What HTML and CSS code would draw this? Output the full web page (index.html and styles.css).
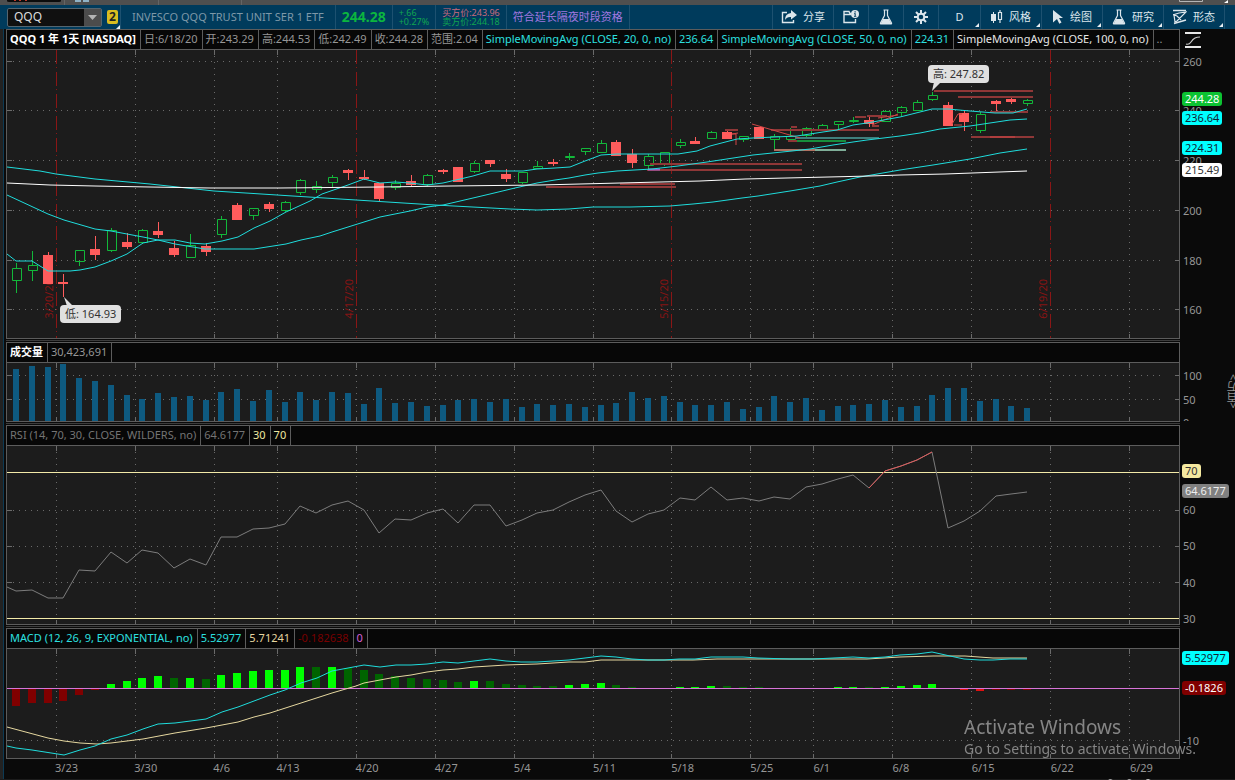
FILE: index.html
```html
<!DOCTYPE html>
<html lang="zh-CN">
<head>
  <meta charset="UTF-8">
  <title>QQQ</title>
  <link rel="stylesheet" href="styles.css">
</head>
<body>

  <div class="tabstrip">
    <svg class="tabs-left" width="250" height="5" viewBox="0 0 250 5">
      <path d="M7 0h54v1q0 1-2 1H9q-2 0-2-1z" fill="#0c0c0c"/>
      <path d="M14 0h2v1h-2zM19 0h2v1h-2zM25 0h2v1h-2z" fill="#c03a2b"/>
      <path d="M75 0h6v2h-6zM83 0h6v2h-6z" fill="#8fb2c6"/>
      <path d="M64 0h1v5h-1zM158 0h1v5h-1zM241 0h1v5h-1z" fill="#656565"/>
    </svg>
    <svg class="tabs-right" width="60" height="5" viewBox="0 0 60 5">
      <path d="M4.500 0v1.500h23V0" fill="none" stroke="#b5b5b5"/>
      <path d="M53 0v3h-4z" fill="#fff"/>
    </svg>
  </div>

  <header class="toolbar">
    <div class="symbol">
      <input type="text" id="symbol" aria-label="代码" value="QQQ">
      <button class="drop" aria-label="选择代码"><svg width="9" height="5" viewBox="0 0 9 5"><path d="M0 0h9L4.500 5z" fill="#b4b4b4"/></svg></button>
    </div>
    <button class="link corner">2</button>
    <div class="cell company">INVESCO QQQ TRUST UNIT SER 1 ETF</div>
    <div class="cell last">244.28</div>
    <div class="cell stack green"><span>+.66</span><span>+0.27%</span></div>
    <div class="cell stack"><span class="red">买方价:243.96</span><span class="green">卖方价:244.18</span></div>
    <div class="cell session">符合延长隔夜时段资格</div>

    <nav class="actions">
      <button class="share">
        <svg width="16" height="14" viewBox="0 0 16 14"><path d="M6 2.500H1.500v10h11V10" fill="none" stroke="#dce6ec" stroke-width="1.400"/><path d="M10 0l6 5-6 4.500V7Q6 6.500 4 10 4 3.500 10 3z" fill="#dce6ec"/></svg>
        分享</button>
      <button class="small" aria-label="日历">
        <svg width="16" height="14" viewBox="0 0 16 14"><path d="M8 3.500H7l-1-2H1v11h11.500V9M1 4.500h7" fill="none" stroke="#dce6ec" stroke-width="1.400"/><circle cx="12" cy="4" r="4" fill="#dce6ec"/><path d="M11.500 1.200h1.200v1.200h-1.200zM11 3.300h1.700v2.600h.6v.8h-2.300v-.8h.6V4.100H11z" fill="#003b5c"/></svg>
      </button>
      <button class="small" aria-label="扫描">
        <svg width="14" height="16" viewBox="0 0 14 16"><path d="M4.500 1h5M5.500 1v5.500L1.500 14q-.4 1 .7 1h9.600q1.100 0 .7-1L8.500 6.500V1" fill="none" stroke="#dce6ec" stroke-width="1.200"/><path d="M4 10h6l2.500 5h-11z" fill="#dce6ec"/></svg>
      </button>
      <button class="small" aria-label="设置">
        <svg width="14" height="14" viewBox="-7 -7 14 14"><path d="M0-7V7M-7 0H7M-5-5L5 5M-5 5L5-5" stroke="#dce6ec" stroke-width="2"/><circle r="3.300" fill="#003b5c" stroke="#dce6ec" stroke-width="2"/></svg>
      </button>
      <button class="period corner">D</button>
      <button class="tool corner">
        <svg width="12" height="14" viewBox="0 0 12 14"><path d="M0 4h5v7H0zM2 2h1v11H2z" fill="#dce6ec"/><path d="M7.500 2.500h3v7h-3zM9 0v2.500M9 9.500V13" fill="none" stroke="#dce6ec" stroke-width="1.200"/></svg>
        风格</button>
      <button class="tool corner">
        <svg width="12" height="14" viewBox="0 0 12 14"><path d="M1 0l10 8H7l2.500 4.500-2.200 1.200L5 9l-4 3.500z" fill="#dce6ec"/></svg>
        绘图</button>
      <button class="tool corner">
        <svg width="14" height="16" viewBox="0 0 14 16"><path d="M4.500 1h5M5.500 1v5.500L1.500 14q-.4 1 .7 1h9.600q1.100 0 .7-1L8.500 6.500V1" fill="none" stroke="#dce6ec" stroke-width="1.200"/><path d="M4 10h6l2.500 5h-11z" fill="#dce6ec"/></svg>
        研究</button>
      <button class="tool corner">
        <svg width="14" height="16" viewBox="0 0 14 16"><path d="M0 1.500h13M1 14.500l12-3.500" stroke="#dce6ec" stroke-width="1.400"/><path d="M0 6l6-2 7-1-9 9-2 1-1-7 3 1 4 4" fill="none" stroke="#dce6ec" stroke-width="1.200"/></svg>
        形态</button>
      <span class="end"></span>
    </nav>
  </header>

  <main>
    <section class="panel">
      <div class="plot">
        <div class="legend">
          <b>QQQ 1 年 1天 [NASDAQ]</b>
          <span>日:6/18/20</span><span>开:243.29</span><span>高:244.53</span><span>低:242.49</span><span>收:244.28</span><span>范围:2.04</span>
          <span class="cyan">SimpleMovingAvg (CLOSE, 20, 0, no)</span><span class="cyan">236.64</span>
          <span class="cyan">SimpleMovingAvg (CLOSE, 50, 0, no)</span><span class="cyan">224.31</span>
          <span class="white">SimpleMovingAvg (CLOSE, 100, 0, no)</span><span class="more">..</span>
        </div>
        <div class="chart" id="price"></div>
      </div>
      <div class="axis">
        <button class="scale" aria-label="坐标"><svg width="16" height="16" viewBox="0 0 16 16"><path d="M0 1h16M0 15h16" stroke="#e8e8e8" stroke-width="2"/><path d="M1 12q3 1 5-2t4-4 5-1" fill="none" stroke="#c8c8c8" stroke-width="1.200"/></svg></button>
        <div class="ticks" id="price-axis"></div>
      </div>
    </section>

    <section class="panel">
      <div class="plot">
        <div class="legend"><b>成交量</b><span>30,423,691</span></div>
        <div class="chart" id="volume"></div>
      </div>
      <div class="axis"><div class="ticks" id="volume-axis"><span class="unit">&lt;百万&gt;</span></div></div>
    </section>

    <section class="panel">
      <div class="plot">
        <div class="legend"><span class="dim">RSI (14, 70, 30, CLOSE, WILDERS, no)</span><span class="dim">64.6177</span><span class="cream">30</span><span class="cream">70</span></div>
        <div class="chart" id="rsi"></div>
      </div>
      <div class="axis"><div class="ticks" id="rsi-axis"></div></div>
    </section>

    <section class="panel">
      <div class="plot">
        <div class="legend"><span class="cyan">MACD (12, 26, 9, EXPONENTIAL, no)</span><span class="cyan">5.52977</span><span class="sand">5.71241</span><span class="maroon">-0.182638</span><span class="pink">0</span></div>
        <div class="chart" id="macd"></div>
      </div>
      <div class="axis"><div class="ticks" id="macd-axis"></div></div>
    </section>

    <div class="dates" id="dates"></div>
  </main>

  <footer class="bottom">
    <svg width="60" height="2" viewBox="0 0 60 2"><path d="M3 2q3-3 7 0M22 2q3-3 7 0M43 0l5 2h-5z" fill="none" stroke="#ccc"/></svg>
  </footer>

  <aside class="watermark">
    <p class="big">Activate Windows</p>
    <p>Go to Settings to activate Windows.</p>
  </aside>

  <script src="chart.js"></script>
</body>
</html>
```

FILE: styles.css
```css
* {
  box-sizing: border-box;
}
body {
  margin: 0;
  min-height: 100vh;
  display: flex;
  flex-direction: column;
  overflow: hidden;
  background: #0a0a0a;
  color: #969696;
  font-family: "Noto Sans", "Noto Sans CJK SC", sans-serif;
  font-size: 11px;
  line-height: 18px;
}
button, input {
  font: inherit;
  color: inherit;
  background: none;
  border: none;
  padding: 0;
}
svg {
  display: block;
  flex: none;
}

/* top strip and toolbar */
.tabstrip {
  display: flex;
  justify-content: space-between;
  height: 5px;
  background: #4f4f4f;
}
.toolbar {
  display: flex;
  height: 24px;
  background: #003b5c;
  padding: 0 10px 0 7px;
  white-space: nowrap;
}
.symbol {
  display: flex;
  align-self: center;
  width: 95px;
  height: 19px;
  background: #101010;
  border: 1px solid #55656f;
  border-radius: 2px;
}
.symbol input {
  flex: 1;
  min-width: 0;
  padding-left: 6px;
  color: #ddd;
  font-size: 12px;
}
.drop {
  display: flex;
  align-items: center;
  justify-content: center;
  width: 17px;
  background: #4c4c4c;
}
.link {
  align-self: center;
  width: 11px;
  height: 14px;
  margin: 0 2px 0 5px;
  background: #d9bd20;
  border-radius: 2px;
  color: #222;
  font-size: 12px;
  font-weight: bold;
  line-height: 14px;
}
.corner {
  position: relative;
}
.corner::after {
  content: "";
  position: absolute;
  right: 1px;
  bottom: 2px;
  border: 2px solid #e8eef2;
  border-top-color: transparent;
  border-left-color: transparent;
}
.link::after {
  right: -2px;
  bottom: -5px;
}
.cell {
  display: flex;
  align-items: center;
  padding: 0 6px;
  border-left: 1px solid #1d5170;
}
.company {
  padding: 0 11px;
  color: #7d98a8;
}
.last {
  color: #0cb53f;
  font-size: 14px;
  font-weight: bold;
}
.stack {
  flex-direction: column;
  align-items: flex-start;
  justify-content: center;
  font-size: 9px;
  line-height: 9px;
}
.green { color: #10a550; }
.red { color: #c96a7c; }
.session {
  color: #a078e0;
  border-right: 1px solid #1d5170;
}
.actions {
  display: flex;
  margin-left: auto;
  color: #dce6ec;
}
.actions button {
  display: flex;
  align-items: center;
  justify-content: center;
  gap: 6px;
  border-left: 1px solid #1d5170;
}
.actions .share { width: 61px; }
.actions .small { width: 35px; }
.actions .period { width: 42px; }
.actions .tool { width: 61px; }
.end { border-left: 1px solid #1d5170; }

/* panels */
main {
  display: flex;
  flex-direction: column;
  gap: 3px;
  padding-left: 6px;
  background: linear-gradient(90deg, #222 3px, #0c3a54 3px 4px, #0a0a0a 4px);
}
.panel {
  display: flex;
  position: relative;
}
.panel + .panel::before {
  content: "";
  position: absolute;
  top: -2px;
  left: 0;
  right: 55px;
  height: 1px;
  background: #3c3c3c;
}
.plot {
  flex: 1;
  min-width: 0;
  border: 1px solid #5c5c5c;
}
.legend {
  display: flex;
  height: 20px;
  border-bottom: 1px solid #5c5c5c;
  background: #070707;
  white-space: nowrap;
  overflow: hidden;
}
.legend > * {
  flex: none;
  padding: 0 4px 0 3px;
  border-right: 1px solid #5c5c5c;
}
.legend b { color: #fff; }
.legend .more {
  border-right: none;
}
.cyan { color: #2ce0e0; }
.white { color: #e8e8e8; }
.dim { color: #747474; }
.cream { color: #eee8a0; }
.sand { color: #e6d6a0; }
.maroon { color: #780000; }
.pink { color: #d35fd3; }

.chart {
  position: relative;
  background: #1c1c1c;
}
.chart svg {
  position: relative;
  width: 100%;
  height: 100%;
}
#price, #price-axis { height: 288px; }
#volume, #volume-axis { height: 58px; }
#rsi, #rsi-axis { height: 178px; }
#macd, #macd-axis { height: 109px; }
.chart path, .chart line, .chart polyline {
  vector-effect: non-scaling-stroke;
}
.grid { stroke: #6a6a6a; stroke-dasharray: 1 5; }
.mark { stroke: #6a6a6a; }
.expiry { stroke: #8a1616; stroke-dasharray: 14 3 1 4; }
.ma { fill: none; stroke: #1fdcdc; }
.ma.long { stroke: #fff; }
.up { fill: none; stroke: #12b83a; }
.down { fill: #ff5c5c; stroke: none; }
.level { stroke: #8f3737; stroke-width: 2; fill: none; }
.trend { stroke: #d04646; fill: none; }
.bar { fill: #0e5a80; }
.rsi-line { fill: none; stroke: #7c7c7c; }
.rsi-high { fill: none; stroke: #e05a5a; }
.band { stroke: #f3eaa8; }
.zero { stroke: #d873d8; }
.signal { fill: none; stroke: #e6d8a0; }
.macd-line { fill: none; stroke: #1fdcdc; }

.expiry-label {
  position: absolute;
  bottom: 19px;
  width: 14px;
  line-height: 14px;
  margin-left: -14px;
  writing-mode: vertical-rl;
  transform: rotate(180deg);
  color: #841414;
}
.callout {
  position: absolute;
  height: 18px;
  padding: 0 5px;
  border-radius: 4px;
  background: #e0e0e0;
  color: #333;
}

.axis {
  width: 55px;
  flex: none;
}
.scale {
  display: flex;
  align-items: center;
  height: 21px;
  padding-left: 5px;
}
.ticks {
  position: relative;
  overflow: hidden;
}
.ticks:only-child {
  margin-top: 21px;
}
.tick {
  position: absolute;
  left: 3px;
  line-height: 14px;
  margin-top: -7px;
}
.tag {
  left: 2px;
  padding: 0 3px;
  border-radius: 3px;
  z-index: 1;
}
.tag.lime { background: #0cc232; color: #fff; }
.tag.aqua { background: #00ffff; color: #123; }
.tag.snow { background: #fff; color: #333; }
.tag.butter { background: #f5e9a0; color: #333; }
.tag.gray { background: #808080; color: #eee; }
.tag.wine { background: #800000; color: #fff; }
.unit {
  position: absolute;
  right: -6px;
  top: 11px;
  width: 16px;
  line-height: 16px;
  writing-mode: vertical-rl;
  transform: rotate(180deg);
}

.dates {
  position: relative;
  height: 20px;
  margin-top: -3px;
  margin-right: 55px;
}
.dates span {
  position: absolute;
}
.bottom {
  display: flex;
  justify-content: flex-end;
  padding-right: 71px;
  height: 2px;
  background: #1c1c1c;
}

.watermark {
  position: fixed;
  right: 39px;
  bottom: 20px;
  color: #858585;
  font-size: 14px;
  z-index: 2;
  pointer-events: none;
}
.watermark p {
  margin: 0;
  line-height: 22px;
}
.watermark .big {
  font-size: 19px;
}
```

FILE: chart.js
```js
// drawing space: x runs from LEFT to LEFT + WIDTH, stretched to the panel
const LEFT = 7, WIDTH = 1172;
const weeks = [[56, '3/23'], [135, '3/30'], [214, '4/6'], [277, '4/13'], [356, '4/20'], [435, '4/27'],
  [514, '5/4'], [593, '5/11'], [671, '5/18'], [750, '5/25'], [813, '6/1'], [892, '6/8'],
  [971, '6/15'], [1050, '6/22'], [1129, '6/29']];
const expiries = { 56: '3/20/20', 356: '4/17/20', 671: '5/15/20', 1050: '6/19/20' };
const barX = i => Math.round(16 + i * 15.8);
const pct = x => (x - LEFT) / WIDTH * 100 + '%';

// u/d, high, body top, body bottom, low
const candles = [
  ['u',263,268,280,292], ['u',251,265,270,280], ['d',252,255,284,284], ['d',274,282,284,297], ['u',250,250,261,265],
  ['d',236,249,255,260], ['u',228,230,250,251], ['d',233,242,247,249], ['u',229,230,242,243], ['d',222,231,235,238],
  ['d',241,248,255,257], ['u',234,245,257,257], ['d',243,246,252,256], ['u',216,219,234,237], ['d',203,205,220,220],
  ['u',208,208,215,219], ['d',202,204,209,212], ['u',201,202,210,211], ['u',179,180,192,194], ['u',181,186,189,192],
  ['u',175,177,182,186], ['d',169,170,173,180], ['d',170,177,179,180], ['d',183,183,199,201], ['u',180,183,187,189],
  ['d',175,181,185,186], ['u',174,175,184,185], ['d',169,170,172,174], ['d',167,167,182,182], ['u',161,163,171,172],
  ['d',160,160,164,167], ['d',169,174,179,182], ['u',172,172,182,183], ['u',161,166,168,168], ['d',159,162,164,166],
  ['u',153,156,157,159], ['u',148,148,151,154], ['u',140,143,152,152], ['d',140,142,156,156], ['d',149,154,163,168],
  ['u',154,156,165,170], ['u',152,152,164,165], ['u',139,142,145,147], ['d',137,141,144,144], ['u',131,132,138,138],
  ['d',130,132,139,139], ['u',136,136,139,141], ['d',127,127,139,139], ['u',134,136,139,150], ['u',128,136,139,139],
  ['u',127,128,135,138], ['u',124,125,129,129], ['u',121,121,124,129], ['u',117,120,121,122], ['d',116,120,124,127],
  ['u',110,111,121,121], ['u',106,107,112,115], ['u',100,102,110,110], ['u',92,95,99,100], ['d',102,105,126,126],
  ['d',110,113,122,131], ['u',112,114,130,132], ['d',100,101,104,112], ['d',97,99,102,104], ['u',99,100,103,105]
];
const volumes = [369,366,367,364,378,381,385,395,399,393,397,396,400,392,389,401,390,402,392,400,392,393,404,388,403,
  402,406,405,400,399,402,399,407,404,405,404,407,405,403,392,398,396,402,405,405,402,409,407,396,402,398,410,406,
  405,404,400,407,406,395,388,388,401,399,406,408];
const rsi = [591,590,598,598,570,571,552,563,550,553,568,559,565,537,537,529,528,524,506,513,505,501,510,533,519,520,
  513,509,523,505,505,526,520,513,510,502,495,490,511,522,514,510,498,500,487,500,498,501,497,499,487,484,479,475,
  488,471,466,460,452,528,521,511,496,494,492];
// histogram edge opposite the zero line; G/g rising and falling above, R/r below
const hist = 'r706 r703 r703 r701 r695 r690 G684 G681 G678 G676 g678 G678 g679 G675 G673 G671 G670 G670 G667 g667 G667 g668 g670 g674 g676 g678 g679 g680 g682 G681 g681 g684 g685 g686 g686 G685 G684 G683 g685 g687 - - G687 G687 G686 g686 g687 g687 - - - - G687 G687 g687 G687 G686 G685 G684 - R690 R691 r690 r690 r690'.split(' ');
const histColor = { G: '#00ff00', g: '#006400', R: '#e01010', r: '#800000' };

const fast = '7,254 16,261 32,261 48,271 70,271 80,270 95,267 111,261 127,254 143,243 158,240 175,240 190,243 205,244 222,241 238,237 254,228 270,221 286,212 310,201 322,194 348,185 364,179 380,183 395,182 410,183 427,185 443,183 473,176 490,171 523,171 537,169 555,168 570,167 585,161 601,155 617,154 678,154 697,151 710,146 737,139 753,138 797,136 823,132 837,130 853,125 867,123 900,117 932,109 948,109 970,111 995,113 1013,113 1027,109';
const sma20 = '7,195 48,214 64,220 95,229 111,231 143,237 158,240 175,244 205,249 254,249 286,244 301,240 320,236 332,232 348,227 364,222 380,217 395,214 410,211 427,207 443,205 473,198 490,194 515,188 537,183 555,180 569,178 585,175 598,173 617,171 652,169 678,166 707,162 753,155 792,151 810,149 833,145 853,142 867,140 900,136 920,133 940,129 970,126 1010,120 1027,119';
const sma50 = '7,167 40,171 56,174 95,179 150,184 214,191 277,195 356,200 435,205 510,209 537,210 569,209 593,207 630,207 670,206 693,204 713,202 742,198 758,196 790,191 820,186 837,182 860,177 900,170 933,165 970,159 1000,153 1027,149';
const sma100 = '7,183 50,185 95,186 150,187 210,188 280,188 380,187 450,186 540,185 620,183 700,181 745,179 870,176 900,175 945,174 1027,171';
const macd = '7,746 16,748 32,750 64,755 80,750 95,746 111,739 127,735 143,729 158,724 175,723 206,719 222,712 238,707 254,701 270,695 285,690 301,683 317,678 332,671 348,668 364,665 380,667 396,665 411,665 427,664 443,662 458,663 474,661 490,659 506,661 521,662 537,662 569,660 585,658 601,656 616,657 632,659 648,660 664,660 679,659 695,659 711,657 743,657 758,658 790,659 813,659 853,657 869,658 885,657 900,655 917,654 932,652 950,656 964,659 980,660 993,660 1010,659 1027,659';
const signal = '7,727 48,738 64,741 80,743 97,744 111,743 143,739 175,733 206,728 238,722 254,717 270,713 301,703 332,693 356,686 364,683 396,677 411,675 427,672 443,670 458,669 474,667 506,665 537,664 569,662 585,662 601,660 693,660 717,659 753,659 790,659 867,659 900,657 933,656 965,656 993,658 1027,658';

const line = (x1, y1, x2, y2, cls) => `<line x1="${x1}" y1="${y1}" x2="${x2}" y2="${y2}" class="${cls}"/>`;
const poly = (points, cls) => `<polyline points="${points}" class="${cls}"/>`;
const rect = (x, y, w, h, extra) => `<rect x="${x}" y="${y}" width="${w}" height="${h}" ${extra}/>`;

function grid(top, height, rows, withExpiry) {
  const bottom = top + height, right = LEFT + WIDTH;
  let s = '';
  weeks.forEach(([x]) => {
    const gx = x + .5;
    if (withExpiry && expiries[x]) {
      s += line(gx, top, gx, bottom, 'expiry');
    } else {
      s += line(gx, top, gx, bottom, 'grid') + line(gx, top, gx, top + 5, 'mark') + line(gx, bottom - 4, gx, bottom, 'mark');
    }
  });
  rows.forEach(y => {
    s += line(LEFT, y + .5, right - 14, y + .5, 'grid') + line(LEFT, y + .5, LEFT + 5, y + .5, 'mark') + line(right - 4, y + .5, right, y + .5, 'mark');
  });
  return s;
}

function draw(id, top, height, content) {
  document.getElementById(id).insertAdjacentHTML('beforeend',
    `<svg viewBox="${LEFT} ${top} ${WIDTH} ${height}" preserveAspectRatio="none">${content}</svg>`);
}

function axis(id, top, ticks) {
  document.getElementById(id).insertAdjacentHTML('beforeend', ticks.map(([y, text, tag]) =>
    `<span class="tick ${tag ? 'tag ' + tag : ''}" style="top:${y - top}px">${text}</span>`).join(''));
}

// price
const price = document.getElementById('price');
for (const x in expiries) {
  price.insertAdjacentHTML('beforeend', `<span class="expiry-label" style="left:${pct(+x)}">${expiries[x]}</span>`);
}
let s = grid(50, 288, [61, 110, 160, 210, 260, 309], true);
candles.forEach(([dir, high, top, bottom, low], i) => {
  const x = barX(i);
  if (dir === 'u') {
    s += `<path class="up" d="M${x - 3.5} ${top + .5}h9v${Math.max(bottom - top, 1)}h-9zM${x + .5} ${high}V${top}M${x + .5} ${bottom + 1}V${low + 1}"/>`;
  } else {
    s += rect(x - 5, top, 10, bottom - top, 'class="down"') + rect(x, high, 1, low - high, 'class="down"');
  }
});
[[546, 676, 187], [620, 675, 184], [650, 802, 164], [647, 802, 170], [725, 738, 130], [771, 879, 130], [791, 797, 127],
 [855, 866, 117], [867, 887, 116], [872, 879, 126], [788, 797, 141], [934, 1033, 91], [958, 1033, 97], [990, 1028, 112],
 [971, 1034, 137]].forEach(([a, b, y]) => s += line(a, y, b, y, 'level'));
s += '<path d="M797 141H846" stroke="#178f3c" stroke-width="2"/><path d="M795 138H879" stroke="#3f7f7c" stroke-width="2"/>';
s += '<path d="M774 150H815" stroke="#b0705f" stroke-width="2"/><path d="M815 150H846" stroke="#7fae98" stroke-width="2"/>';
s += '<path d="M648 169.500H660" stroke="#a060c8" stroke-width="2"/>';
s += '<path class="trend" d="M752 124L800 138M736 145V134H732L738 133M872 125L898 114M878 118L898 115M952 124L958 114H962M954 125H962M990 137H1015"/>';
s += poly(sma50, 'ma') + poly(sma20, 'ma') + poly(fast, 'ma') + poly(sma100, 'ma long');
s += '<path d="M64 297L67 306H73zM932 91L934 82H941z" fill="#e0e0e0"/>';
draw('price', 50, 288, s);
price.insertAdjacentHTML('beforeend',
  `<span class="callout" style="left:${pct(60)};top:255px">低: 164.93</span><span class="callout" style="left:${pct(928)};top:15px">高: 247.82</span>`);
axis('price-axis', 50, [[62, '260'], [111, '240'], [161, '220'], [211, '200'], [261, '180'], [310, '160'],
  [99, '244.28', 'lime'], [118, '236.64', 'aqua'], [148, '224.31', 'aqua'], [170, '215.49', 'snow']]);

// volume
s = grid(363, 58, [375, 399]);
volumes.forEach((y, i) => s += rect(barX(i) - 3, y, 6, 421 - y, 'class="bar"'));
draw('volume', 363, 58, s);
axis('volume-axis', 363, [[376, '100'], [400, '50'], [423, '0']]);

// rsi
s = grid(446, 178, [510, 546, 582]);
s += line(LEFT, 472.5, LEFT + WIDTH, 472.5, 'band') + line(LEFT, 618.5, LEFT + WIDTH, 618.5, 'band');
const rsiPoints = rsi.map((y, i) => barX(i) + ',' + y);
s += poly('7,587 ' + rsiPoints.join(' '), 'rsi-line') + poly(rsiPoints.slice(54, 59).join(' '), 'rsi-high');
draw('rsi', 446, 178, s);
axis('rsi-axis', 446, [[510, '60'], [546, '50'], [583, '40'], [619, '30'], [471, '70', 'butter'], [491, '64.6177', 'gray']]);

// macd
s = grid(649, 109, [740]);
hist.forEach((h, i) => {
  if (h === '-') return;
  const y = +h.slice(1);
  s += rect(barX(i) - 4, Math.min(y, 688), 8, Math.abs(688 - y), `fill="${histColor[h[0]]}"`);
});
s += line(LEFT, 688.5, LEFT + WIDTH, 688.5, 'zero') + poly(signal, 'signal') + poly(macd, 'macd-line');
draw('macd', 649, 109, s);
axis('macd-axis', 649, [[741, '-10'], [658, '5.52977', 'aqua'], [688, '-0.1826', 'wine']]);

document.getElementById('dates').innerHTML = weeks.map(([x, label]) =>
  `<span style="left:${pct(x)}">${label}</span>`).join('');
```
